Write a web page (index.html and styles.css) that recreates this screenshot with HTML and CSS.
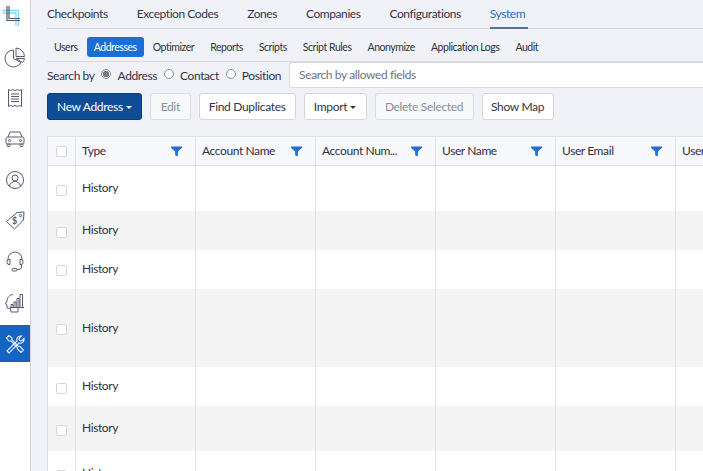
FILE: index.html
```html
<!DOCTYPE html>
<html lang="en">
<head>
<meta charset="utf-8">
<title>Addresses</title>
<link rel="stylesheet" href="styles.css">
</head>
<body>
<div class="app">
  <nav class="side">
    <a class="side-item logo"><svg width="30" height="36" viewBox="0 0 30 36" fill="none"><g stroke="#7fd8f6" stroke-width="1.3"><path d="M2 10.500H18.500V26M3 13H16V26"/></g><g stroke="#55586a" stroke-width="1.2"><path d="M7 6V20.500H20M9 6V18.500H20"/></g></svg></a>
    <a class="side-item"><svg width="22" height="22" viewBox="0 0 22 22" fill="none" stroke="#565a6e" stroke-width="1"><path d="M9.500 4A8.500 8.500 0 1 0 17 16.500L9.500 12.500Z"/><path d="M12 2A9 9 0 0 1 20.500 10.500H12Z"/><path d="M12 12.500h8.500A8 8 0 0 1 18.500 16.500Z"/></svg></a>
    <a class="side-item"><svg width="18" height="20" viewBox="0 0 18 20" fill="none" stroke="#565a6e" stroke-width="1"><path d="M2.500 1.500l2 1 2-1 2.500 1 2.500-1 2 1 2-1v17l-2-1-2 1-2.500-1-2.500 1-2-1-2 1Z"/><path d="M5 6h8M5 8.500h8M5 11h8M5 13.500h8"/></svg></a>
    <a class="side-item"><svg width="20" height="18" viewBox="0 0 20 18" fill="none" stroke="#565a6e" stroke-width="1"><path d="M3 7l2-5h10l2 5"/><rect x="1" y="7" width="18" height="7" rx="1.500"/><circle cx="4.500" cy="10.500" r="1"/><circle cx="15.500" cy="10.500" r="1"/><rect x="2" y="14" width="3" height="2.500" rx="1"/><rect x="15" y="14" width="3" height="2.500" rx="1"/></svg></a>
    <a class="side-item"><svg width="20" height="20" viewBox="0 0 20 20" fill="none" stroke="#565a6e" stroke-width="1"><circle cx="10" cy="10" r="8.500"/><circle cx="10" cy="8" r="3"/><path d="M4.500 16c.5-3 3-4.500 5.500-4.500s5 1.500 5.500 4.500"/></svg></a>
    <a class="side-item"><svg width="21" height="21" viewBox="0 0 21 21" fill="none" stroke="#565a6e" stroke-width="1"><path d="M1.500 11.500L12 2.500l7-.5-.5 8-9 9Z"/><circle cx="15.500" cy="5.500" r="1.200"/><text x="7" y="14" class="tag-s">$</text></svg></a>
    <a class="side-item"><svg width="20" height="22" viewBox="0 0 20 22" fill="none" stroke="#565a6e" stroke-width="1"><path d="M3 9V8a7 7 0 0 1 14 0v1"/><path d="M5 8.500H4a2 2 0 0 0-2 2v1a2 2 0 0 0 2 2h1ZM15 8.500h1a2 2 0 0 1 2 2v1a2 2 0 0 1-2 2h-1Z"/><path d="M16.500 13.500v3c0 1.500-2 2-4.500 2"/><rect x="7" y="17.500" width="5" height="2.500" rx="1.200"/></svg></a>
    <a class="side-item"><svg width="20" height="22" viewBox="0 0 20 22" fill="none" stroke="#565a6e" stroke-width="1"><path d="M8 2.500C4 3 2 6 2 9L.5 12 2 13v3l3.500.5L6 20h7v-4"/><path d="M6 15v-2.500h2V15M9 15v-5h2v5M12 15V6.500h2V15M15 15V2.500h2.500V15"/><path d="M5 15.500h14"/></svg></a>
    <a class="side-item active"><svg width="20" height="20" viewBox="0 0 20 20" fill="none" stroke="#e8f0fb" stroke-width="1.1"><path d="M2 17l10-10c-1-2.500 1-5.500 4.500-5L14 4.500l.5 2 2 .5 2.500-2.500c.5 3-2 5.500-5 4.500L4 19Z"/><path d="M1.500 4L4 1.500l3 2.500v2l6 6 2 .5 3.500 3.500-2.500 2.500L12.500 15l-.5-2-6-6H4Z"/></svg></a>
  </nav>
  <main class="main">
    <div class="tabs">
      <a class="tab">Checkpoints</a>
      <a class="tab">Exception Codes</a>
      <a class="tab">Zones</a>
      <a class="tab">Companies</a>
      <a class="tab">Configurations</a>
      <a class="tab current">System</a>
    </div>
    <div class="subnav">
      <a class="pill">Users</a>
      <a class="pill on">Addresses</a>
      <a class="pill">Optimizer</a>
      <a class="pill">Reports</a>
      <a class="pill">Scripts</a>
      <a class="pill">Script Rules</a>
      <a class="pill">Anonymize</a>
      <a class="pill">Application Logs</a>
      <a class="pill">Audit</a>
    </div>
    <div class="search">
      <span class="search-label">Search by</span>
      <label class="radio"><span class="dot checked"></span>Address</label>
      <label class="radio"><span class="dot"></span>Contact</label>
      <label class="radio"><span class="dot"></span>Position</label>
      <div class="search-input">Search by allowed fields</div>
    </div>
    <div class="actions">
      <button class="btn primary">New Address<i class="caret"></i></button>
      <button class="btn disabled w-edit">Edit</button>
      <button class="btn">Find Duplicates</button>
      <button class="btn w-import">Import<i class="caret"></i></button>
      <button class="btn disabled w-delete">Delete Selected</button>
      <button class="btn w-map">Show Map</button>
    </div>
    <div class="grid-wrap">
      <table class="grid">
        <colgroup><col class="c0"><col class="c1"><col class="c1"><col class="c1"><col class="c1"><col class="c1"><col class="c1"></colgroup>
        <thead>
          <tr>
            <th class="chk"><span class="box"></span></th>
            <th><div class="th"><span class="th-t">Type</span><svg class="funnel" viewBox="0 0 12 11"><path d="M0 0h12v1.500L7.500 5.500V11l-3-1.500v-4L0 1.500Z"/></svg></div></th>
            <th><div class="th"><span class="th-t">Account Name</span><svg class="funnel" viewBox="0 0 12 11"><path d="M0 0h12v1.500L7.500 5.500V11l-3-1.500v-4L0 1.500Z"/></svg></div></th>
            <th><div class="th"><span class="th-t">Account Num...</span><svg class="funnel" viewBox="0 0 12 11"><path d="M0 0h12v1.500L7.500 5.500V11l-3-1.500v-4L0 1.500Z"/></svg></div></th>
            <th><div class="th"><span class="th-t">User Name</span><svg class="funnel" viewBox="0 0 12 11"><path d="M0 0h12v1.500L7.500 5.500V11l-3-1.500v-4L0 1.500Z"/></svg></div></th>
            <th><div class="th"><span class="th-t">User Email</span><svg class="funnel" viewBox="0 0 12 11"><path d="M0 0h12v1.500L7.500 5.500V11l-3-1.500v-4L0 1.500Z"/></svg></div></th>
            <th><div class="th"><span class="th-t">User</span></div></th>
          </tr>
        </thead>
        <tbody>
          <tr class="r45"><td class="chk low"><span class="box"></span></td><td>History</td><td></td><td></td><td></td><td></td><td></td></tr>
          <tr class="r39 alt"><td class="chk low"><span class="box"></span></td><td>History</td><td></td><td></td><td></td><td></td><td></td></tr>
          <tr class="r39"><td class="chk"><span class="box"></span></td><td>History</td><td></td><td></td><td></td><td></td><td></td></tr>
          <tr class="r78 alt"><td class="chk mid"><span class="box"></span></td><td class="nudge">History</td><td></td><td></td><td></td><td></td><td></td></tr>
          <tr class="r39"><td class="chk low"><span class="box"></span></td><td>History</td><td></td><td></td><td></td><td></td><td></td></tr>
          <tr class="r45 alt"><td class="chk low"><span class="box"></span></td><td>History</td><td></td><td></td><td></td><td></td><td></td></tr>
          <tr class="r45"><td class="chk low"><span class="box"></span></td><td>History</td><td></td><td></td><td></td><td></td><td></td></tr>
        </tbody>
      </table>
    </div>
  </main>
</div>
</body>
</html>
```
FILE: styles.css
```css
* { box-sizing: border-box; }
html, body { margin: 0; height: 100%; overflow: hidden; }
body { font-family: Lato, "Liberation Sans", sans-serif; font-size: 12px; letter-spacing: -0.4px; color: #2f3240; background: #f0f2f7; }
.app { display: flex; width: 703px; height: 471px; overflow: hidden; }
.side { flex: 0 0 31px; width: 31px; background: #fff; border-right: 1px solid #d3d5da; display: flex; flex-direction: column; }
.side-item { height: 41px; width: 30px; display: flex; align-items: center; justify-content: center; }
.side-item.logo { height: 36px; }
.side-item.active { background: #1464c4; height: 37px; margin-top: 2px; }
.tag-s { font: 700 9px Lato, sans-serif; fill: #565a6e; stroke: none; }
.main { flex: 1; min-width: 0; padding-left: 16px; }
.tabs { display: flex; height: 29px; border-bottom: 1px solid #d3d5da; gap: 29px; }
.tab { line-height: 28px; height: 29px; letter-spacing: -0.43px; color: #30364a; white-space: nowrap; }
.tab.current { color: #2a6bd0; border-bottom: 2px solid #5b7394; padding-right: 3px; }
.subnav { display: flex; align-items: center; height: 33px; border-bottom: 1px solid #d8dade; padding-top: 3px; }
.pill { font-size: 10.500px; letter-spacing: -0.45px; line-height: 20px; height: 20px; padding: 0 7px; margin-right: 2px; border-radius: 3px; color: #2f3240; white-space: nowrap; }
.pill.on { background: #1a6ed8; color: #fff; }
.search { display: flex; align-items: center; height: 26px; }
.search-label { margin-right: 6px; color: #30364a; }
.radio { display: inline-flex; align-items: center; margin-right: 7px; color: #30364a; }
.dot { width: 10px; height: 10px; border: 1px solid #8a8d96; border-radius: 50%; background: #fff; margin-right: 6px; position: relative; top: -1px; }
.dot.checked { margin-right: 7px; background: radial-gradient(circle, #7a7d88 0 3px, #fff 3.500px); }
.search-input { flex: 1; height: 26px; margin-left: 1px; background: #fff; border: 1px solid #d8dade; border-right: 0; border-radius: 3px 0 0 3px; padding-left: 9px; line-height: 24px; letter-spacing: -0.38px; color: #6f7480; }
.actions { display: flex; gap: 8px; margin-top: 5px; }
.btn { height: 27px; padding: 0 9px; font: 12px Lato, sans-serif; letter-spacing: -0.33px; color: #30364a; background: #fff; border: 1px solid #d4d6db; border-radius: 3px; white-space: nowrap; }
.btn.primary { background: #0f4d96; border-color: #0b3d7a; color: #fff; }
.btn.disabled { background: #f7f8fa; color: #8b8f99; border-color: #dcdee2; }
.w-edit { width: 41px; }
.w-import { width: 63px; }
.w-delete { width: 99px; padding: 0; }
.w-map { width: 72px; padding: 0; }
.caret { display: inline-block; width: 0; height: 0; margin-left: 3px; vertical-align: middle; border-top: 3px solid currentColor; border-left: 3px solid transparent; border-right: 3px solid transparent; }
.grid-wrap { margin-top: 16px; overflow: hidden; height: 340px; }
.grid { table-layout: fixed; border-collapse: collapse; width: 656px; background: #fff; }
.c0 { width: 28px; }
.c1 { width: 120px; }
.grid th, .grid td { border: 1px solid #e0e1e6; padding: 0 6px; text-align: left; font-weight: 400; color: #2f3240; }
.grid td { padding-bottom: 2px; }
.grid td.nudge { padding-bottom: 0; }
.grid thead tr { height: 29px; }
.grid th { background: #f7f8fb; }
.th { display: flex; align-items: center; justify-content: space-between; padding-right: 7px; }
.th-t { white-space: nowrap; position: relative; top: -1px; }
.funnel { width: 11px; height: 11px; fill: #1f6fd6; flex: none; }
.grid td { border-top: 0; border-bottom: 0; }
.alt td { background: #f4f4f5; }
.r45 { height: 45px; }
.r39 { height: 39px; }
.r78 { height: 78px; }
.chk { text-align: center; padding: 0 !important; }
.box { display: block; width: 11px; height: 11px; margin: 0 auto; background: #fff; border: 1px solid #d4d6db; border-radius: 2px; }
td .box { margin-top: 2px; }
.low .box { margin-top: 4px; }
.mid .box { margin-top: 3px; }
```
